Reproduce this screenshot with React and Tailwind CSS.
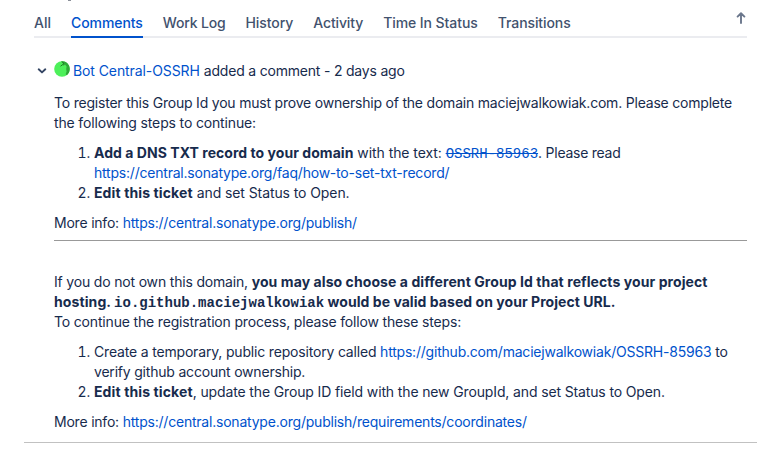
const tabs = [
  { label: 'All', cls: 'tracking-[0px]' },
  { label: 'Comments', cls: 'tracking-[-0.07px]', active: true },
  { label: 'Work Log', cls: 'tracking-[-0.18px]' },
  { label: 'History', cls: 'tracking-[-0.07px]' },
  { label: 'Activity', cls: 'tracking-[-0.12px]' },
  { label: 'Time In Status', cls: 'tracking-[-0.07px]' },
  { label: 'Transitions', cls: 'tracking-[-0.09px]' },
];

function Link({ children, className = 'tracking-[-0.213px]' }) {
  return <a href="#" className={`text-[#0052cc] ${className}`}>{children}</a>;
}

function TabBar() {
  return (
    <div className="relative ml-[34px] mr-[31px] flex h-[38px] justify-between shadow-[inset_0_-2px_0_#ebecf0]">
      <span className="absolute left-[34px] top-0 h-px w-[3px] bg-[#8a8f99]" />
      <nav className="flex gap-5 pt-[13px]">
        {tabs.map((t) => (
          <a
            key={t.label}
            href="#"
            className={`h-[25px] whitespace-nowrap font-medium ${t.cls} ${t.active ? 'border-b-2 border-[#0052cc] text-[#0052cc]' : 'text-[#42526e]'}`}
          >
            {t.label}
          </a>
        ))}
      </nav>
      <svg className="mr-px mt-3 h-3 w-[10px]" viewBox="0 0 10 12" fill="none" stroke="#6b778c" strokeWidth="1.9" strokeLinecap="round" strokeLinejoin="round">
        <path d="M5 11V1.5M1.6 4.6 5 1.3l3.4 3.3" />
      </svg>
    </div>
  );
}

function Avatar() {
  return (
    <svg className="mb-[5px] h-4 w-4" viewBox="0 0 16 16">
      <circle cx="8" cy="8" r="7.8" fill="#4df05a" />
      <path d="M7 .4C10-.3 13.500 1.200 15 4.500c1.600 3.800.3 8-2.500 9.800l-.8-1.300.9-2.500-.4-2.500.4-2.500-1.600-2L9.500 5 9 2.500z" fill="#2fa838" />
      <path d="M8.500.8 9.800 2.800 6.500 5.200" stroke="#1d7a26" strokeWidth="1" fill="none" />
    </svg>
  );
}

export default function App() {
  return (
    <div className="h-[451px] w-[778px] overflow-hidden bg-white font-['Inter','Liberation_Sans',sans-serif] text-[14px] leading-5 text-[#172b4d]">
      <TabBar />
      <article className="ml-6 mr-[21px] h-[405px] border-b border-[#c1c1c1] pl-[30px] pr-[10px] pt-[23px]">
        <header className="-ml-[17px] flex h-5 items-center whitespace-nowrap">
          <svg className="mr-[7px] h-[6px] w-[10px]" viewBox="0 0 10 6" fill="none" stroke="#344563" strokeWidth="1.9" strokeLinecap="round" strokeLinejoin="round">
            <path d="M1.7 1.3 5 4.4l3.3-3.100" />
          </svg>
          <Avatar />
          <div className="ml-[3px]">
            <Link className="tracking-[-0.09px]">Bot Central-OSSRH</Link>{' '}
            <span className="tracking-[-0.2px]">added a comment - 2 days ago</span>
          </div>
        </header>
        <div className="whitespace-nowrap pt-3">
          <p>
            <span className="tracking-[-0.208px]">To register this Group Id you must prove ownership of the domain maciejwalkowiak.com. Please complete</span>
            <br />
            <span className="tracking-[-0.15px]">the following steps to continue:</span>
          </p>
          <ol className="my-[10px] list-decimal pl-10">
            <li>
              <b className="font-bold tracking-[0.045px]">Add a DNS TXT record to your domain</b>{' '}
              <span className="tracking-[-0.07px]">with the text: </span>
              <Link className="font-['Liberation_Mono',monospace] leading-none line-through">OSSRH-85963</Link>
              <span className="tracking-[-0.25px]">. Please read</span>
              <br />
              <Link>https://central.sonatype.org/faq/how-to-set-txt-record/</Link>
            </li>
            <li>
              <b className="font-bold tracking-[0.12px]">Edit this ticket</b>{' '}
              <span className="tracking-[-0.09px]">and set Status to Open.</span>
            </li>
          </ol>
          <p>
            <span className="tracking-[-0.21px]">More info: </span><Link>https://central.sonatype.org/publish/</Link>
          </p>
          <hr className="mb-[31px] mt-[7px] border-t border-[#999]" />
          <p>
            <span className="tracking-[-0.18px]">If you do not own this domain, </span>
            <b className="font-bold tracking-[0.08px]">you may also choose a different Group Id that reflects your project</b>
            <br />
            <b className="font-bold tracking-[0.1px]">hosting. </b>
            <b className="font-['Liberation_Mono',monospace] font-bold leading-none">io.github.maciejwalkowiak</b>
            <b className="font-bold tracking-[0.05px]"> would be valid based on your Project URL.</b>
            <br />
            <span className="tracking-[-0.17px]">To continue the registration process, please follow these steps:</span>
          </p>
          <ol className="my-[10px] list-decimal pl-10">
            <li>
              <span className="tracking-[-0.178px]">Create a temporary, public repository called </span>
              <Link>https://github.com/maciejwalkowiak/OSSRH-85963</Link>
              <span className="tracking-[-0.1px]"> to</span>
              <br />
              <span className="tracking-[-0.2px]">verify github account ownership.</span>
            </li>
            <li>
              <b className="font-bold tracking-[0.12px]">Edit this ticket</b>
              <span className="tracking-[-0.135px]">, update the Group ID field with the new GroupId, and set Status to Open.</span>
            </li>
          </ol>
          <p>
            <span className="tracking-[-0.21px]">More info: </span><Link>https://central.sonatype.org/publish/requirements/coordinates/</Link>
          </p>
        </div>
      </article>
    </div>
  );
}
